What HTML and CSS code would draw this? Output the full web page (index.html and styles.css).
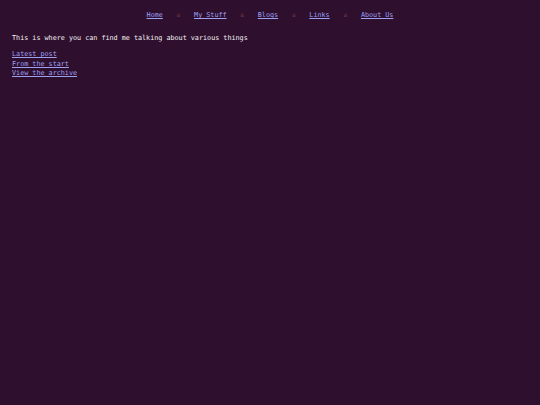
FILE: index.html
```html
<!DOCTYPE html>
<html>
<head>
<meta charset="utf-8">
<link rel="stylesheet" href="styles.css">
</head>
<body>
<nav class="nav">
  <a href="#">Home</a><span class="star">☆</span>
  <a href="#">My Stuff</a><span class="star">☆</span>
  <a href="#">Blogs</a><span class="star">☆</span>
  <a href="#">Links</a><span class="star">☆</span>
  <a href="#">About Us</a>
</nav>
<main class="main">
  <p class="intro">This is where you can find me talking about various things</p>
  <ul class="links">
    <li><a href="#">Latest post</a></li>
    <li><a href="#">From the start</a></li>
    <li><a href="#">View the archive</a></li>
  </ul>
</main>
</body>
</html>
```

FILE: styles.css
```css
html, body {
  margin: 0;
  padding: 0;
  background: #2f0f2e;
}
body {
  font-family: "DejaVu Sans Mono", monospace;
  font-size: 6.75px;
  line-height: 9.5px;
  color: #f4f0f4;
  padding: 11px 12px;
}
a {
  color: #9d9ff0;
  text-decoration: underline;
}
.nav {
  display: flex;
  justify-content: center;
  align-items: center;
  gap: 13.5px;
}
.star {
  color: #e0a066;
  font-size: 7px;
}
.main {
  margin-top: 13px;
}
.intro {
  margin: 0 0 7px 0;
}
.links {
  list-style: none;
  margin: 0;
  padding: 0;
}
```
